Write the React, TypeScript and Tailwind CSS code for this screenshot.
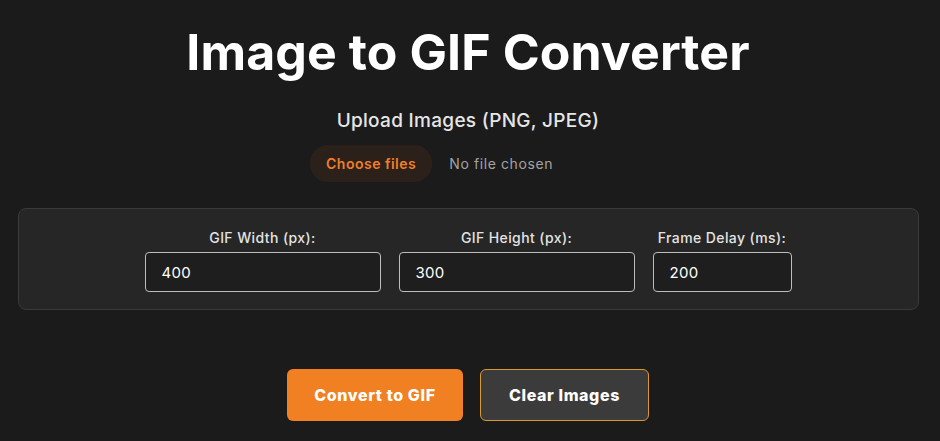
import React, { useState } from 'react';

interface Field {
  id: string;
  label: string;
  value: string;
  width: string;
}

const fields: Field[] = [
  { id: 'gifWidth', label: 'GIF Width (px):', value: '400', width: 'w-[236px]' },
  { id: 'gifHeight', label: 'GIF Height (px):', value: '300', width: 'w-[236px]' },
  { id: 'frameDelay', label: 'Frame Delay (ms):', value: '200', width: 'w-[139px]' },
];

const App = () => {
  const [values, setValues] = useState<Record<string, string>>(
    Object.fromEntries(fields.map((f) => [f.id, f.value]))
  );

  return (
    <div className="min-h-[441px] bg-[#1b1b1b] text-white font-['Inter',sans-serif] flex flex-col items-center pt-[22px] pr-[4px]">
      <h1 className="text-[50px] leading-[60px] font-bold tracking-[0.1px]">Image to GIF Converter</h1>

      <label className="mt-[26px] text-[19px] leading-[26px] font-medium tracking-[0.3px] text-[#e6e6e6]">
        Upload Images (PNG, JPEG)
      </label>
      {/* native-looking file input, wider than its content */}
      <div className="mt-[11px] w-[316px] flex items-center">
        <button className="h-[37px] px-4 rounded-[18px] bg-[#2b211a] text-[#f07e2a] text-[14px] font-semibold tracking-[0.5px]">
          Choose files
        </button>
        <span className="ml-[17px] text-[14px] tracking-[0.6px] text-[#a3a3a3]">No file chosen</span>
      </div>

      {/* settings panel */}
      <div className="mt-[26px] w-[901px] h-[102px] bg-[#262626] border border-[#3a3a3a] rounded-[8px] flex justify-center gap-[18px] pt-[19px]">
        {fields.map((field) => (
          <div key={field.id} className="flex flex-col items-center">
            <label htmlFor={field.id} className="text-[14px] leading-[20px] font-medium tracking-[0.4px] text-[#e3e3e3]">
              {field.label}
            </label>
            <input
              id={field.id}
              type="number"
              value={values[field.id]}
              onChange={(e) => setValues({ ...values, [field.id]: e.target.value })}
              className={`${field.width} mt-[4px] h-[40px] px-4 bg-[#1e1e1e] border border-[#bdbdbd] rounded-[4px] text-[15px] tracking-[0.3px] text-white outline-none`}
            />
          </div>
        ))}
      </div>

      <div className="mt-[59px] flex gap-[17px]">
        <button className="w-[176px] h-[52px] rounded-[6px] bg-[#f08022] text-white text-[16px] font-extrabold tracking-[0.6px]">
          Convert to GIF
        </button>
        <button className="w-[169px] h-[52px] rounded-[6px] bg-[#3b3b3b] border border-[#d99a2b] text-white text-[16px] font-extrabold tracking-[0.6px]">
          Clear Images
        </button>
      </div>
    </div>
  );
};

export default App;
